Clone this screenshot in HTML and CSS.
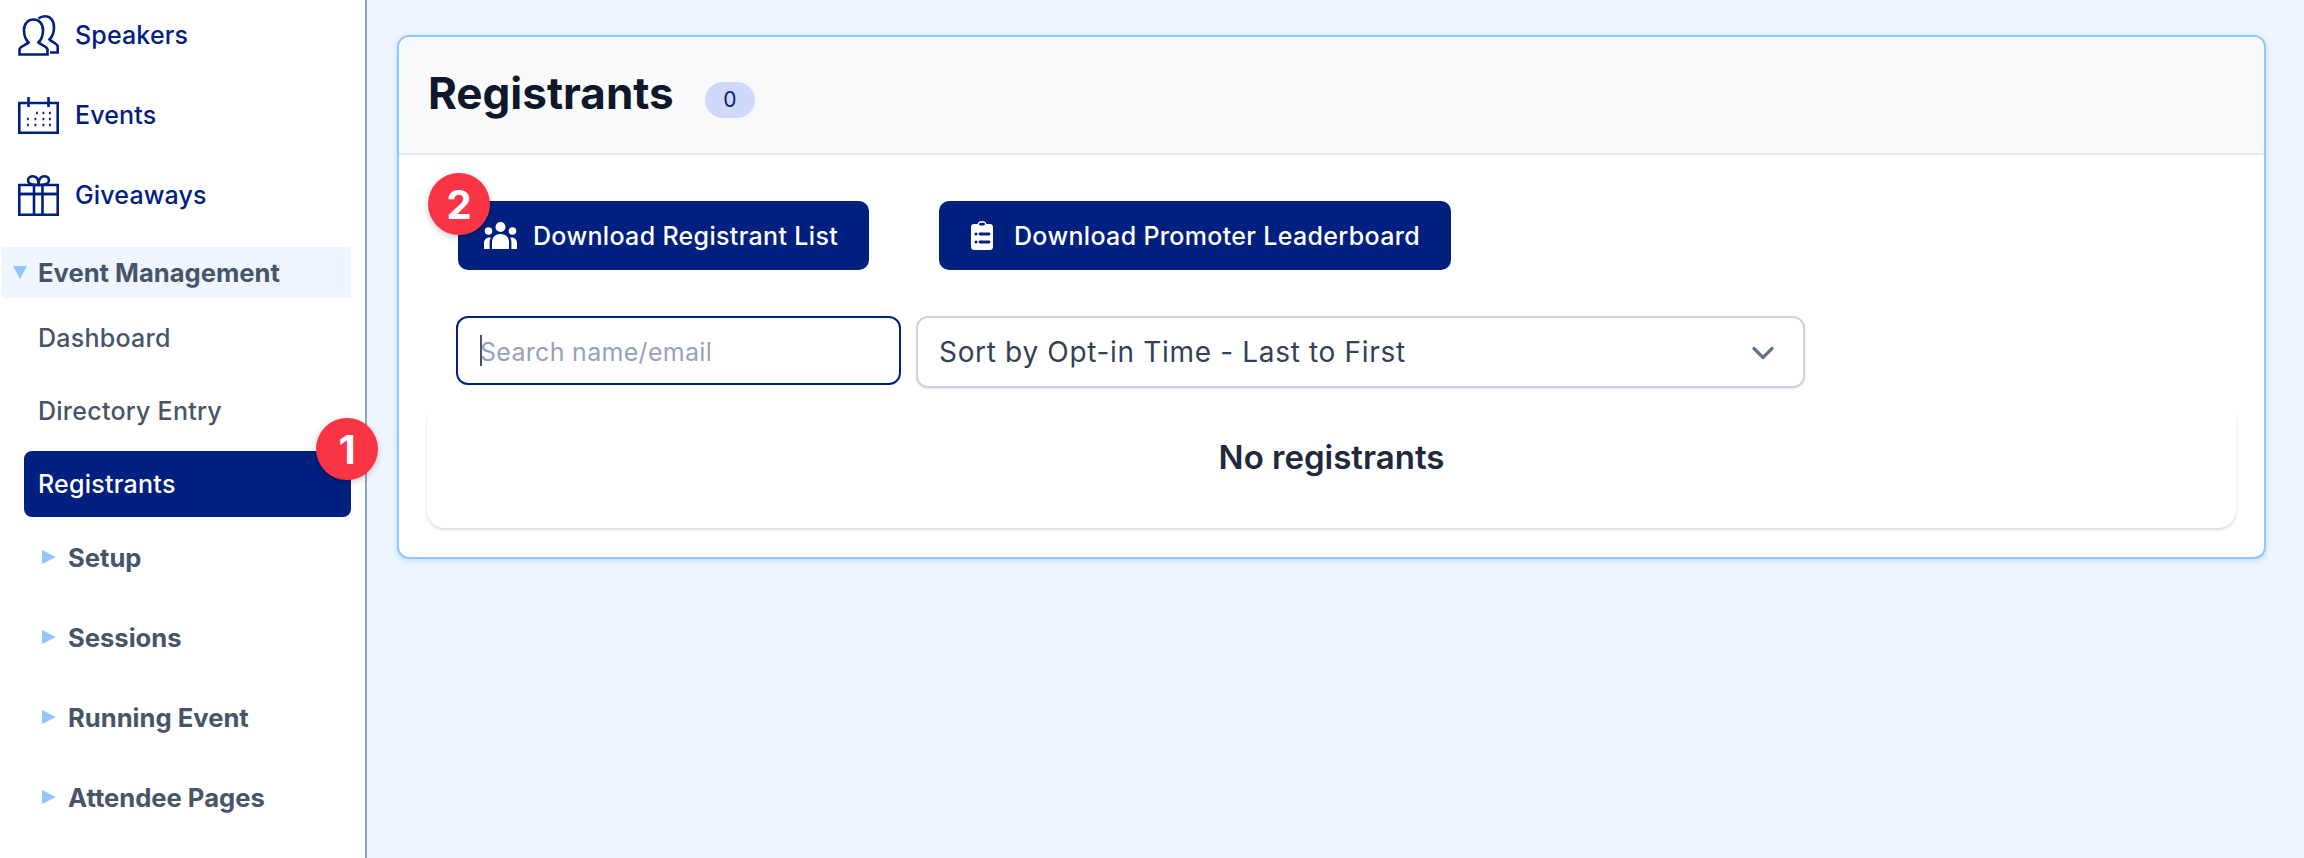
FILE: index.html
```html
<!DOCTYPE html>
<html lang="en">
<head>
  <meta charset="UTF-8" />
  <title>Registrants</title>
  <link rel="stylesheet" href="styles.css">
</head>
<body>
  <aside class="sidebar">
    <a class="nav-item">
      <svg class="nav-icon" viewBox="0 0 41 41" fill="none" stroke="currentColor" stroke-width="2.600">
        <path d="M1.500 39.500V34.500C1.500 31.500 8 30 10.500 27.500C7.500 24.500 6 20 6 15C6 8.500 10 4.500 15.500 4.500C21 4.500 25 8.500 25 15C25 20 23.500 24.500 20.500 27.500C23 30 29.500 31.500 29.500 34.500V39.500Z"/>
        <path d="M20.500 3.500C22.500 1.800 24.500 1.300 27 1.300C32 1.300 36 5 36 12C36 17 34.500 21.500 31.500 24.500C34 27 39.700 28.500 39.700 31.500V37.500H32"/>
      </svg>
      <span>Speakers</span>
    </a>
    <a class="nav-item">
      <svg class="nav-icon" viewBox="0 0 41 37" fill="none" stroke="currentColor" stroke-width="2.600">
        <path d="M1.300 6H39.700V35.700H1.300Z"/>
        <path d="M10.500 0V10M30.500 0V10"/>
        <path d="M18 16H19.800M24.500 16H26.300M31 16H32.800M9 22H10.800M16.500 22H18.300M24.500 22H26.300M31 22H32.800M9 28H10.800M16.500 28H18.300M24.500 28H26.300M31 28H32.800" stroke-width="2.400"/>
      </svg>
      <span>Events</span>
    </a>
    <a class="nav-item">
      <svg class="nav-icon" viewBox="0 0 41 41" fill="none" stroke="currentColor" stroke-width="2.600">
        <path d="M1.300 10H39.700V19H1.300Z"/>
        <path d="M1.300 19H39.700V39.700H1.300Z"/>
        <path d="M16 10V40M24.500 10V40"/>
        <path d="M20.500 10C12 10 10 7.500 10 5.500C10 2.500 12.500 1.300 15 1.300C18.500 1.300 20.500 4.500 20.500 10C20.500 4.500 22.500 1.300 26 1.300C28.500 1.300 31 2.500 31 5.500C31 7.500 29 10 20.500 10Z"/>
      </svg>
      <span>Giveaways</span>
    </a>

    <div class="group-open"><i class="tri-down"></i>Event Management</div>
    <div class="sub-list">
      <a class="sub-item">Dashboard</a>
      <a class="sub-item">Directory Entry</a>
      <a class="sub-item active">Registrants<b class="step step-one">1</b></a>
    </div>
    <div class="group"><i class="tri-right"></i>Setup</div>
    <div class="group"><i class="tri-right"></i>Sessions</div>
    <div class="group"><i class="tri-right"></i>Running Event</div>
    <div class="group"><i class="tri-right"></i>Attendee Pages</div>
  </aside>

  <main class="main">
    <section class="card">
      <header class="card-head">
        <h1>Registrants</h1>
        <span class="count">0</span>
      </header>
      <div class="card-body">
        <div class="actions">
          <button class="btn btn-list">
            <b class="step step-two">2</b>
            <svg class="btn-users" viewBox="0 0 33 27" fill="currentColor">
              <circle cx="16.500" cy="5" r="5"/>
              <circle cx="4.500" cy="9" r="3.800"/>
              <circle cx="28.500" cy="9" r="3.800"/>
              <path d="M8 27V20C8 15 11.500 12 16.500 12C21.500 12 25 15 25 20V27Z"/>
              <path d="M0 27V21C0 18 2 15.500 5.500 15.500C6 15.500 6.500 15.600 6.800 15.700C6 17 5.600 18.500 5.600 20V27Z"/>
              <path d="M33 27V21C33 18 31 15.500 27.500 15.500C27 15.500 26.500 15.600 26.200 15.700C27 17 27.400 18.500 27.400 20V27Z"/>
            </svg>
            Download Registrant List
          </button>
          <button class="btn btn-board">
            <svg class="btn-clip" viewBox="0 0 22 29">
              <path fill="currentColor" d="M3 3H6.500C7 1 8.500 0 11 0C13.500 0 15 1 15.500 3H19C20.700 3 22 4.300 22 6V26C22 27.700 20.700 29 19 29H3C1.300 29 0 27.700 0 26V6C0 4.300 1.300 3 3 3Z"/>
              <path fill="#00207f" d="M8 3.200C8 2.300 9 1.800 11 1.800C13 1.800 14 2.300 14 3.200C14 4.100 13 4.600 11 4.600C9 4.600 8 4.100 8 3.200Z"/>
              <path d="M9 13H18M9 21H18" stroke="#00207f" stroke-width="2.800" stroke-linecap="round"/>
              <circle cx="5" cy="13" r="1.500" fill="#00207f"/>
              <circle cx="5" cy="21" r="1.500" fill="#00207f"/>
            </svg>
            Download Promoter Leaderboard
          </button>
        </div>
        <div class="filters">
          <div class="search">
            <input type="text" placeholder="Search name/email">
            <i class="caret"></i>
          </div>
          <div class="sort">
            <select>
              <option>Sort by Opt-in Time - Last to First</option>
            </select>
            <svg class="chevron" viewBox="0 0 24 14" fill="none" stroke="currentColor" stroke-width="3.200" stroke-linecap="round" stroke-linejoin="round">
              <path d="M3 2.500L12 11.500L21 2.500"/>
            </svg>
          </div>
        </div>
        <div class="empty">No registrants</div>
      </div>
    </section>
  </main>
</body>
</html>
```

FILE: styles.css
```css
* {
  box-sizing: border-box;
}
body {
  margin: 0;
  height: 858px;
  display: flex;
  overflow: hidden;
  font-family: Inter, "Noto Sans", sans-serif;
  background: #eff6ff;
}

/* sidebar */
.sidebar {
  position: relative;
  z-index: 1;
  flex: none;
  width: 367px;
  height: 858px;
  padding: 10px 14px 0 2px;
  background: #fff;
  border-right: 2px solid #94a3b8;
  overflow: visible;
}
.nav-item {
  display: flex;
  align-items: center;
  height: 50px;
  margin-bottom: 30px;
  padding-left: 16px;
  color: #00207f;
  font-size: 25px;
  font-weight: 500;
  letter-spacing: .15px;
}
.nav-icon {
  width: 41px;
  height: auto;
  margin-right: 16px;
  flex: none;
}
.nav-item:last-of-type {
  margin-bottom: 0;
}
.group-open {
  display: flex;
  align-items: center;
  height: 51px;
  margin-top: 27px;
  padding-left: 11px;
  background: #eff6ff;
  color: #475569;
  font-size: 25.600px;
  font-weight: 700;
}
.tri-down {
  width: 0;
  height: 0;
  margin-right: 11px;
  border-left: 7px solid transparent;
  border-right: 7px solid transparent;
  border-top: 13px solid #93c5fd;
}
.sub-list {
  margin-top: 7px;
  margin-left: 22px;
}
.sub-item {
  display: flex;
  align-items: center;
  position: relative;
  height: 66px;
  margin-bottom: 7px;
  padding-left: 14px;
  color: #475569;
  font-size: 25px;
  font-weight: 500;
  letter-spacing: .25px;
}
.sub-item.active {
  margin-bottom: 15px;
  background: #00207f;
  border-radius: 8px;
  color: #fff;
}
.group {
  display: flex;
  align-items: center;
  height: 50px;
  margin-bottom: 30px;
  padding-left: 40px;
  color: #475569;
  font-size: 25.600px;
  font-weight: 700;
}
.tri-right {
  width: 0;
  height: 0;
  margin-right: 12px;
  border-top: 7px solid transparent;
  border-bottom: 7px solid transparent;
  border-left: 14px solid #93c5fd;
}

/* numbered markers */
.step {
  position: absolute;
  display: flex;
  align-items: center;
  justify-content: center;
  width: 62px;
  height: 62px;
  border-radius: 50%;
  background: #f93545;
  color: #fff;
  font-size: 40px;
  font-weight: 700;
  letter-spacing: 0;
  box-shadow: 0 2px 6px rgba(0, 0, 0, .22);
}
.step-one {
  top: -33px;
  right: -27px;
}
.step-two {
  top: -28px;
  left: -30px;
}

/* main */
.main {
  flex: 1;
  padding: 35px 38px 0 30px;
}
.card {
  height: 524px;
  background: #fff;
  border: 2px solid #93c5fd;
  border-radius: 12px;
  box-shadow: 0 2px 6px rgba(147, 197, 253, .5);
  overflow: hidden;
}
.card-head {
  display: flex;
  align-items: center;
  height: 118px;
  padding: 0 29px 4px;
  background: #f8fafc;
  border-bottom: 2px solid #e2e8f0;
}
.card-head h1 {
  margin: 0 31px 0 0;
  color: #0f172a;
  font-size: 44px;
  font-weight: 700;
}
.count {
  display: flex;
  align-items: center;
  justify-content: center;
  width: 50px;
  height: 36px;
  margin-top: 13px;
  border-radius: 18px;
  background: #d0d9fb;
  color: #00207f;
  font-size: 21px;
}
.card-body {
  padding: 46px 28px 0;
}
.actions {
  display: flex;
  gap: 70px;
  padding-left: 31px;
}
.btn {
  position: relative;
  display: flex;
  align-items: center;
  height: 69px;
  border: 0;
  border-radius: 10px;
  background: #00207f;
  color: #fff;
  font-family: inherit;
  font-size: 25px;
  font-weight: 500;
  letter-spacing: .33px;
}
.btn-list {
  width: 411px;
  padding-left: 26px;
}
.btn-board {
  width: 512px;
  padding-left: 32px;
}
.btn-users {
  width: 33px;
  margin-right: 16px;
}
.btn-clip {
  width: 22px;
  margin-right: 21px;
}
.filters {
  display: flex;
  align-items: flex-start;
  gap: 15px;
  margin-top: 46px;
  padding-left: 29px;
}
.search {
  position: relative;
  width: 445px;
}
.search input {
  display: block;
  width: 100%;
  height: 69px;
  padding: 2px 22px 0;
  border: 2px solid #00207f;
  border-radius: 12px;
  outline: 0;
  font-family: inherit;
  font-size: 25px;
  letter-spacing: .3px;
}
.search input::placeholder {
  color: #94a3b8;
  opacity: 1;
}
.caret {
  position: absolute;
  top: 19px;
  left: 24px;
  width: 2px;
  height: 31px;
  background: #475569;
}
.sort {
  position: relative;
  width: 889px;
}
.sort select {
  display: block;
  width: 100%;
  height: 72px;
  padding: 0 21px;
  border: 2px solid #cbd5e1;
  border-radius: 12px;
  background: #fff;
  appearance: none;
  box-shadow: 0 1px 2px rgba(0, 0, 0, .1);
  color: #334155;
  font-family: inherit;
  font-size: 28px;
  letter-spacing: .67px;
}
.chevron {
  position: absolute;
  top: 30px;
  right: 30px;
  width: 24px;
  color: #64748b;
}
.empty {
  display: flex;
  align-items: center;
  justify-content: center;
  height: 125px;
  margin-top: 15px;
  padding-bottom: 17px;
  border-radius: 18px;
  background: #fff;
  box-shadow: 0 2px 3px rgba(0, 0, 0, .14);
  color: #1e293b;
  font-size: 33px;
  font-weight: 600;
}
```
